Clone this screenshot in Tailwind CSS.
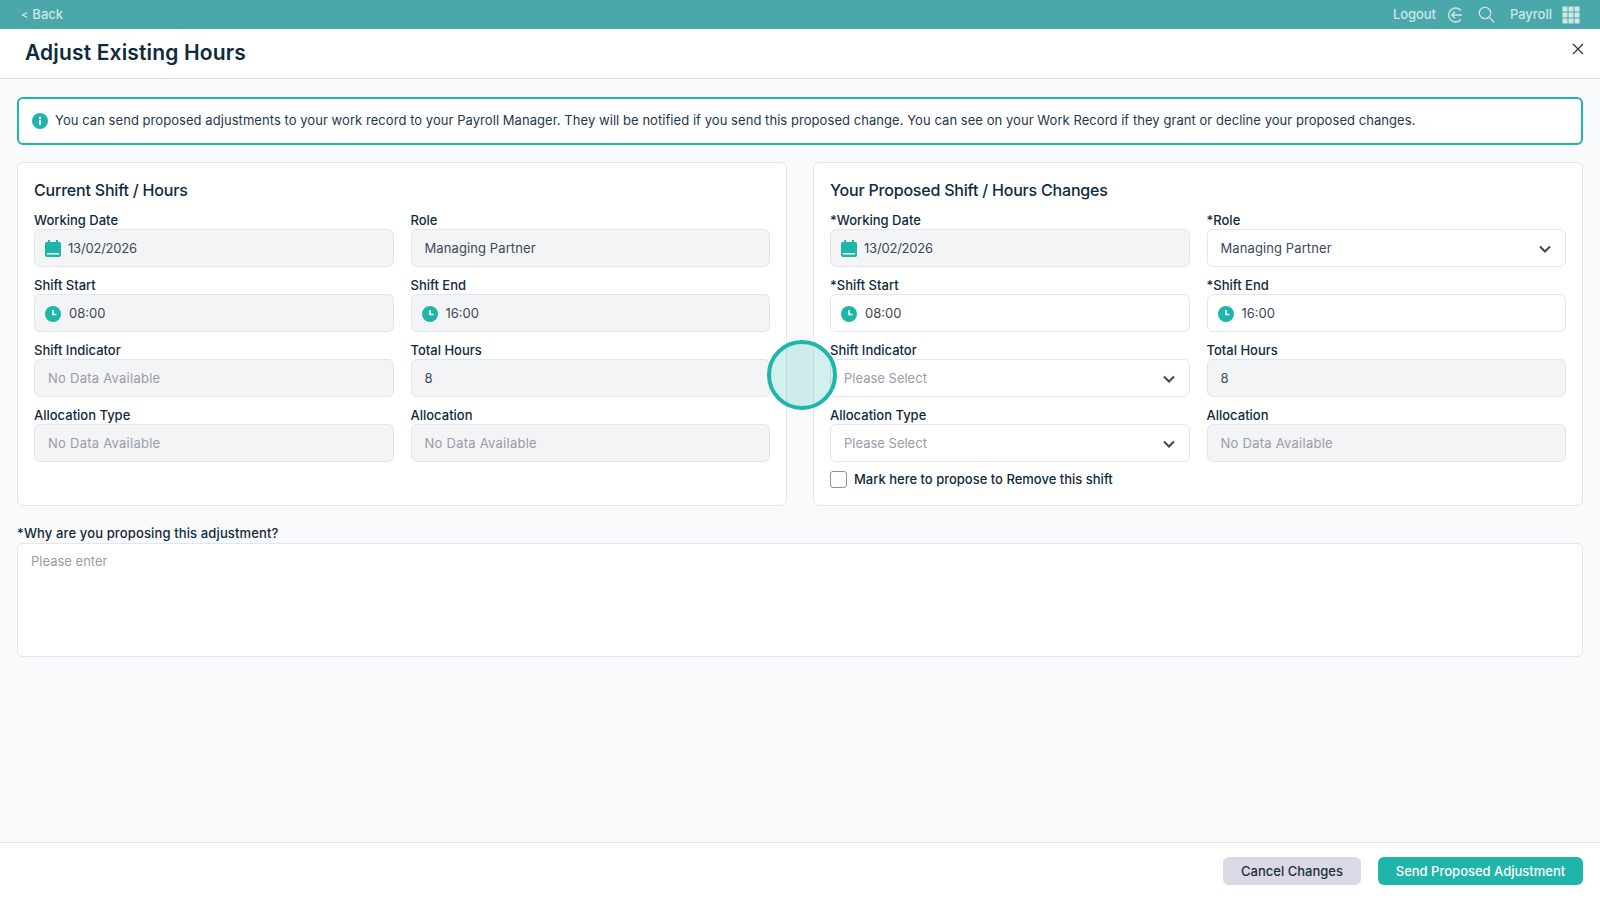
<!DOCTYPE html>
<html lang="en">
  <head>
    <meta charset="UTF-8" />
    <meta name="viewport" content="width=device-width, initial-scale=1.0"/>
    <title>Adjust Existing Hours</title>
    <script src="https://cdn.jsdelivr.net/npm/@tailwindcss/browser@4"></script>
  </head>
  <body class="h-[900px] w-[1600px] overflow-hidden bg-[#f9fafb] font-['Inter',sans-serif] text-[#0f2a3d] relative">
    <!-- Top bar -->
    <div class="h-[29px] bg-[#4aa8ab] flex items-center justify-between pl-[21px] pr-[20px] text-[13px] text-[#cfe6e6] font-medium">
      <div class="flex items-center gap-[4px]"><span class="text-[11px]">&lt;</span><span>Back</span></div>
      <div class="flex items-center">
        <span class="tracking-[-0.1px]">Logout</span>
        <svg class="ml-[10px]" width="18" height="18" viewBox="0 0 18 18" fill="none" stroke="#cfe6e6" stroke-width="1.4"><path d="M15 4.500A7 7 0 1 0 15 13.500"/><path d="M16 9H6M9 5.800 5.800 9 9 12.200"/></svg>
        <svg class="ml-[14px]" width="17" height="17" viewBox="0 0 17 17" fill="none" stroke="#cfe6e6" stroke-width="1.3"><circle cx="7" cy="7" r="5.700"/><path d="m11.200 11.200 5 5"/></svg>
        <span class="ml-[15px]">Payroll</span>
        <svg class="ml-[10px]" width="18" height="18" viewBox="0 0 18 18" fill="#cfe6e6"><rect width="5" height="5" x="0.500" y="0.500"/><rect width="5" height="5" x="6.500" y="0.500"/><rect width="5" height="5" x="12.500" y="0.500"/><rect width="5" height="5" x="0.500" y="6.500"/><rect width="5" height="5" x="6.500" y="6.500"/><rect width="5" height="5" x="12.500" y="6.500"/><rect width="5" height="5" x="0.500" y="12.500"/><rect width="5" height="5" x="6.500" y="12.500"/><rect width="5" height="5" x="12.500" y="12.500"/></svg>
      </div>
    </div>

    <!-- Title -->
    <div class="h-[50px] bg-white border-b border-[#d9dbe3] flex items-start justify-between pl-[25px] pr-[16px]">
      <h1 class="text-[21px] leading-[29px] mt-[9px] font-semibold tracking-[0.15px]">Adjust Existing Hours</h1>
      <svg class="mt-[14px]" width="12" height="12" viewBox="0 0 12 12" stroke="#2a3a48" stroke-width="1.3"><path d="m1 1 10 10M11 1 1 11"/></svg>
    </div>

    <div class="px-[17px] pt-[18px]">
      <!-- Notice -->
      <div class="h-[48px] bg-white border-2 border-[#20b5aa] rounded-[6px] flex items-center pl-[13px] gap-[7px] text-[13px] text-[#24384a]">
        <svg width="16" height="16" viewBox="0 0 16 16"><circle cx="8" cy="8" r="8" fill="#20b5aa"/><rect x="7" y="6.800" width="2" height="5" fill="#fff"/><rect x="7" y="3.800" width="2" height="2" fill="#fff"/></svg>
        <span class="tracking-[0.055px]">You can send proposed adjustments to your work record to your Payroll Manager. They will be notified if you send this proposed change. You can see on your Work Record if they grant or decline your proposed changes.</span>
      </div>

      <div class="flex gap-[26px] mt-[17px]">
        <!-- Current -->
        <section class="w-[770px] h-[344px] bg-white border border-[#e3e5ea] rounded-[6px] px-[16px] pt-[16px]">
          <h2 class="text-[16px] leading-[22px] font-medium tracking-[-0.2px]">Current Shift / Hours</h2>
          <div class="grid grid-cols-2 gap-x-[17px] gap-y-[9px] mt-[10px] text-[13px]">
            <div>
              <label class="block h-[18px] leading-[18px] font-medium">Working Date</label>
              <div class="h-[38px] pt-[1px] bg-[#f3f4f6] border border-[#e3e5ea] rounded-[6px] flex items-center pl-[10px] gap-[7px] text-[#3a4a58]">
                <svg width="16" height="17" viewBox="0 0 16 17" fill="#20b5aa"><path d="M3 0h2v2h6V0h2v2h1.500A1.500 1.500 0 0 1 16 3.500V15a2 2 0 0 1-2 2H2a2 2 0 0 1-2-2V3.500A1.500 1.500 0 0 1 1.500 2H3z"/><rect x="2" y="13" width="12" height="1.500" fill="#fff"/></svg>
                <span class="tracking-[-0.2px]">13/02/2026</span>
              </div>
            </div>
            <div>
              <label class="block h-[18px] leading-[18px] font-medium">Role</label>
              <div class="h-[38px] pt-[1px] bg-[#f3f4f6] border border-[#e3e5ea] rounded-[6px] flex items-center pl-[13px] text-[#3a4a58] tracking-[0.1px]">Managing Partner</div>
            </div>
            <div>
              <label class="block h-[18px] leading-[18px] font-medium">Shift Start</label>
              <div class="h-[38px] pt-[1px] bg-[#f3f4f6] border border-[#e3e5ea] rounded-[6px] flex items-center pl-[10px] gap-[8px] text-[#3a4a58]">
                <svg width="16" height="16" viewBox="0 0 16 16"><circle cx="8" cy="8" r="8" fill="#20b5aa"/><path d="M8 4v4.500h3.500" fill="none" stroke="#fff" stroke-width="1.500"/></svg>
                <span>08:00</span>
              </div>
            </div>
            <div>
              <label class="block h-[18px] leading-[18px] font-medium">Shift End</label>
              <div class="h-[38px] pt-[1px] bg-[#f3f4f6] border border-[#e3e5ea] rounded-[6px] flex items-center pl-[10px] gap-[8px] text-[#3a4a58]">
                <svg width="16" height="16" viewBox="0 0 16 16"><circle cx="8" cy="8" r="8" fill="#20b5aa"/><path d="M8 4v4.500h3.500" fill="none" stroke="#fff" stroke-width="1.500"/></svg>
                <span>16:00</span>
              </div>
            </div>
            <div>
              <label class="block h-[18px] leading-[18px] font-medium">Shift Indicator</label>
              <div class="h-[38px] pt-[1px] bg-[#f3f4f6] border border-[#e3e5ea] rounded-[6px] flex items-center pl-[13px] text-[#9a9ca8] tracking-[0.25px]">No Data Available</div>
            </div>
            <div>
              <label class="block h-[18px] leading-[18px] font-medium">Total Hours</label>
              <div class="h-[38px] pt-[1px] bg-[#f3f4f6] border border-[#e3e5ea] rounded-[6px] flex items-center pl-[13px] text-[#3a4a58]">8</div>
            </div>
            <div>
              <label class="block h-[18px] leading-[18px] font-medium">Allocation Type</label>
              <div class="h-[38px] pt-[1px] bg-[#f3f4f6] border border-[#e3e5ea] rounded-[6px] flex items-center pl-[13px] text-[#9a9ca8] tracking-[0.25px]">No Data Available</div>
            </div>
            <div>
              <label class="block h-[18px] leading-[18px] font-medium">Allocation</label>
              <div class="h-[38px] pt-[1px] bg-[#f3f4f6] border border-[#e3e5ea] rounded-[6px] flex items-center pl-[13px] text-[#9a9ca8] tracking-[0.25px]">No Data Available</div>
            </div>
          </div>
        </section>

        <!-- Proposed -->
        <section class="w-[770px] h-[344px] bg-white border border-[#e3e5ea] rounded-[6px] px-[16px] pt-[16px]">
          <h2 class="text-[16px] leading-[22px] font-medium tracking-[-0.2px]">Your Proposed Shift / Hours Changes</h2>
          <div class="grid grid-cols-2 gap-x-[17px] gap-y-[9px] mt-[10px] text-[13px]">
            <div>
              <label class="block h-[18px] leading-[18px] font-medium">*Working Date</label>
              <div class="h-[38px] pt-[1px] bg-[#f3f4f6] border border-[#e3e5ea] rounded-[6px] flex items-center pl-[10px] gap-[7px] text-[#3a4a58]">
                <svg width="16" height="17" viewBox="0 0 16 17" fill="#20b5aa"><path d="M3 0h2v2h6V0h2v2h1.500A1.500 1.500 0 0 1 16 3.500V15a2 2 0 0 1-2 2H2a2 2 0 0 1-2-2V3.500A1.500 1.500 0 0 1 1.500 2H3z"/><rect x="2" y="13" width="12" height="1.500" fill="#fff"/></svg>
                <span class="tracking-[-0.2px]">13/02/2026</span>
              </div>
            </div>
            <div>
              <label class="block h-[18px] leading-[18px] font-medium">*Role</label>
              <div class="h-[38px] pt-[1px] bg-white border border-[#e3e5ea] rounded-[6px] flex items-center justify-between pl-[13px] pr-[14px] text-[#3a4a58]">
                <span class="tracking-[0.1px]">Managing Partner</span>
                <svg width="12" height="8" viewBox="0 0 12 8" fill="none" stroke="#3f4650" stroke-width="2"><path d="m1 1.500 5 5 5-5"/></svg>
              </div>
            </div>
            <div>
              <label class="block h-[18px] leading-[18px] font-medium">*Shift Start</label>
              <div class="h-[38px] pt-[1px] bg-white border border-[#e3e5ea] rounded-[6px] flex items-center pl-[10px] gap-[8px] text-[#3a4a58]">
                <svg width="16" height="16" viewBox="0 0 16 16"><circle cx="8" cy="8" r="8" fill="#20b5aa"/><path d="M8 4v4.500h3.500" fill="none" stroke="#fff" stroke-width="1.500"/></svg>
                <span>08:00</span>
              </div>
            </div>
            <div>
              <label class="block h-[18px] leading-[18px] font-medium">*Shift End</label>
              <div class="h-[38px] pt-[1px] bg-white border border-[#e3e5ea] rounded-[6px] flex items-center pl-[10px] gap-[8px] text-[#3a4a58]">
                <svg width="16" height="16" viewBox="0 0 16 16"><circle cx="8" cy="8" r="8" fill="#20b5aa"/><path d="M8 4v4.500h3.500" fill="none" stroke="#fff" stroke-width="1.500"/></svg>
                <span>16:00</span>
              </div>
            </div>
            <div>
              <label class="block h-[18px] leading-[18px] font-medium">Shift Indicator</label>
              <div class="h-[38px] pt-[1px] bg-white border border-[#e3e5ea] rounded-[6px] flex items-center justify-between pl-[13px] pr-[14px] text-[#9a9ca8]">
                <span>Please Select</span>
                <svg width="12" height="8" viewBox="0 0 12 8" fill="none" stroke="#3f4650" stroke-width="2"><path d="m1 1.500 5 5 5-5"/></svg>
              </div>
            </div>
            <div>
              <label class="block h-[18px] leading-[18px] font-medium">Total Hours</label>
              <div class="h-[38px] pt-[1px] bg-[#f3f4f6] border border-[#e3e5ea] rounded-[6px] flex items-center pl-[13px] text-[#3a4a58]">8</div>
            </div>
            <div>
              <label class="block h-[18px] leading-[18px] font-medium">Allocation Type</label>
              <div class="h-[38px] pt-[1px] bg-white border border-[#e3e5ea] rounded-[6px] flex items-center justify-between pl-[13px] pr-[14px] text-[#9a9ca8]">
                <span>Please Select</span>
                <svg width="12" height="8" viewBox="0 0 12 8" fill="none" stroke="#3f4650" stroke-width="2"><path d="m1 1.500 5 5 5-5"/></svg>
              </div>
            </div>
            <div>
              <label class="block h-[18px] leading-[18px] font-medium">Allocation</label>
              <div class="h-[38px] pt-[1px] bg-[#f3f4f6] border border-[#e3e5ea] rounded-[6px] flex items-center pl-[13px] text-[#9a9ca8] tracking-[0.25px]">No Data Available</div>
            </div>
          </div>
          <div class="flex items-center gap-[7px] mt-[8px] text-[13px] font-medium">
            <span class="w-[17px] h-[17px] bg-white border border-[#8f949c] rounded-[3px]"></span>
            <span>Mark here to propose to Remove this shift</span>
          </div>
        </section>
      </div>

      <!-- Reason -->
      <label class="block mt-[18px] h-[18px] leading-[18px] text-[13px] font-medium tracking-[0.13px]">*Why are you proposing this adjustment?</label>
      <div class="h-[114px] bg-white border border-[#e3e5ea] rounded-[6px] mt-[1px] pl-[13px] pt-[8px] text-[13px] leading-[18px] text-[#9a9ca8]">Please enter</div>
    </div>

    <!-- Footer -->
    <div class="absolute bottom-0 left-0 w-full h-[58px] bg-white border-t border-[#e3e5ea] flex items-start justify-end gap-[17px] pr-[17px] pt-[14px] text-[13px] font-medium">
      <button class="w-[138px] h-[28px] pt-[1px] bg-[#d9dae6] rounded-[6px] text-[#1b2f40]">Cancel Changes</button>
      <button class="w-[205px] h-[28px] pt-[1px] bg-[#20b5aa] rounded-[6px] text-white">Send Proposed Adjustment</button>
    </div>

    <!-- Highlight marker -->
    <div class="absolute left-[767px] top-[340px] w-[70px] h-[70px] rounded-full border-[4px] border-[#20b5aa] bg-[#20b5aa]/20"></div>
  </body>
</html>
